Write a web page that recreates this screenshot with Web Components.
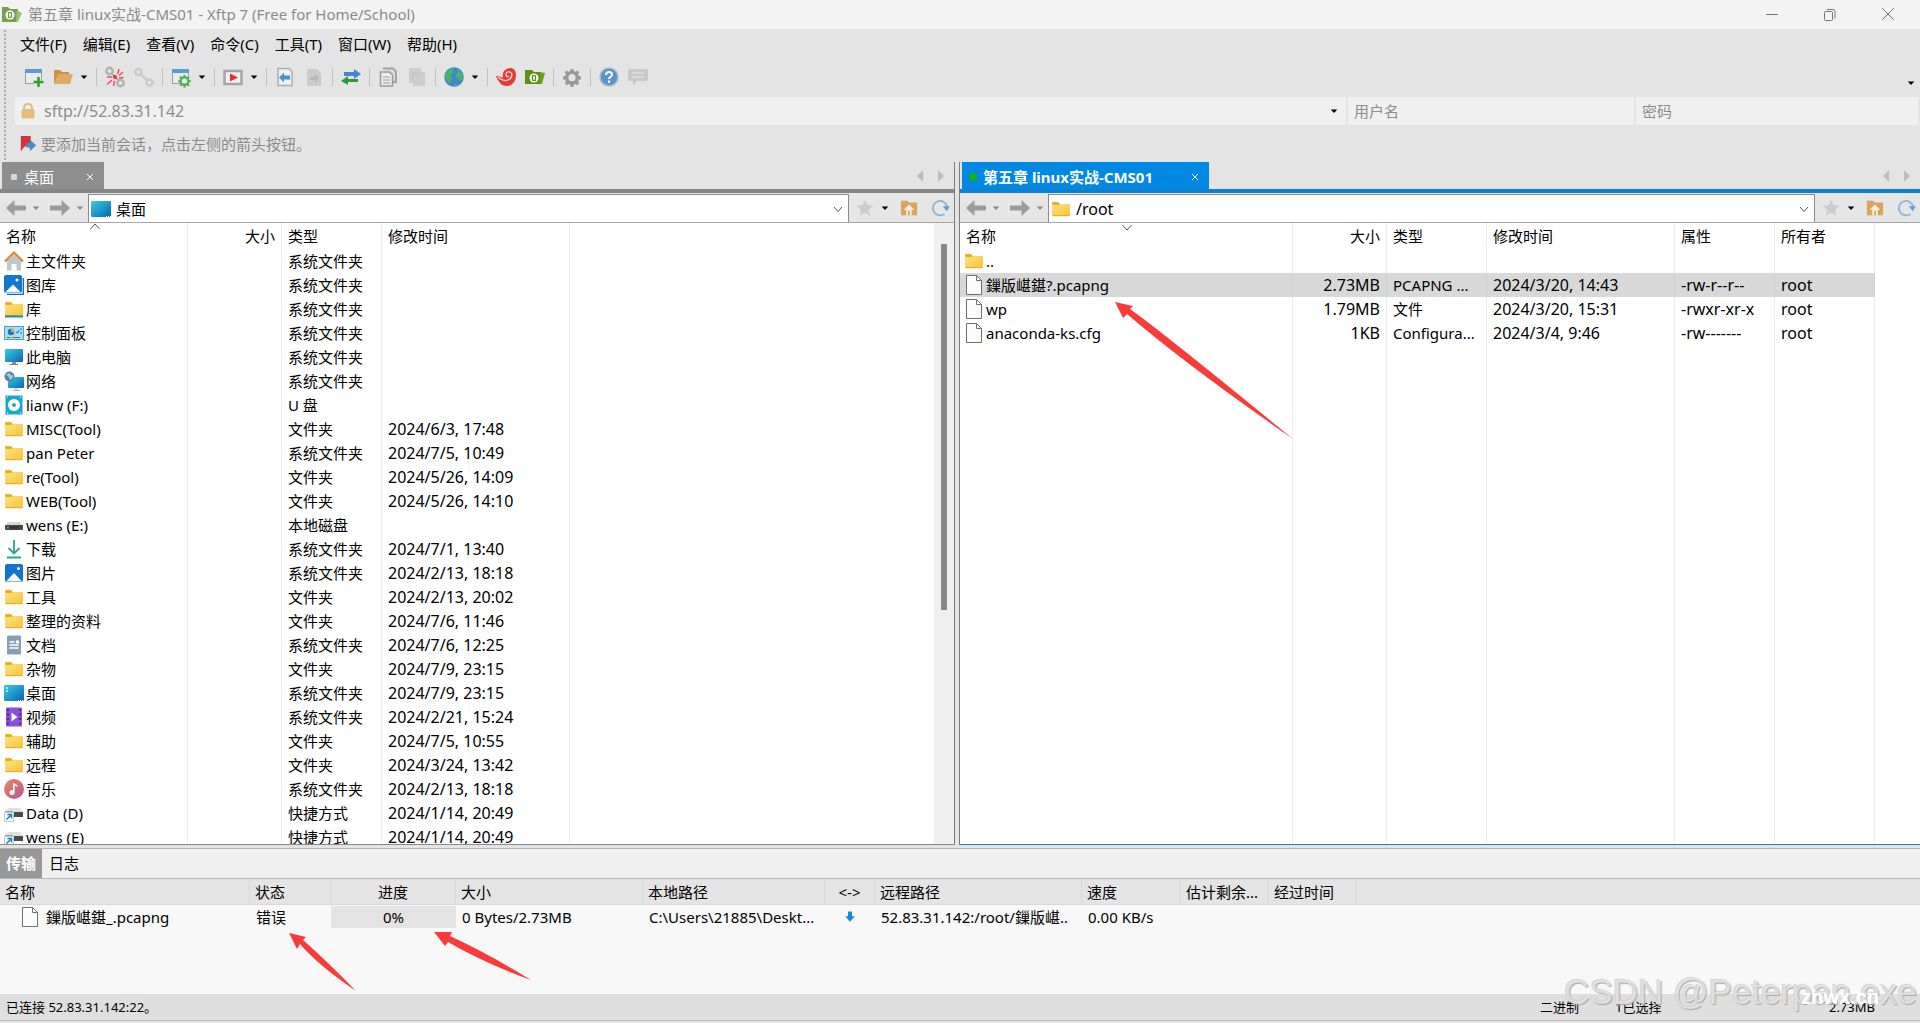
<!DOCTYPE html>
<html lang="zh-CN">
<head>
<meta charset="utf-8">
<title>第五章 linux实战-CMS01 - Xftp 7 (Free for Home/School)</title>
<style>
  html, body { margin: 0; height: 100%; }
  body { font: 15px/20px "Noto Sans", "Noto Sans CJK SC", sans-serif; color: #000; background: #e4e4e4; overflow: hidden; }
</style>
</head>
<body>
<xftp-app></xftp-app>
<script>
const FOLDER = '<defs><linearGradient id="g" x1="0" y1="0" x2="1" y2="1"><stop offset="0" stop-color="#ffe08a"/><stop offset="1" stop-color="#fbc52f"/></linearGradient></defs><path d="M1 4q0-1 1-1h5l2 2v3H1z" fill="#e8b21c"/><path d="M1 6h7l1-1h9q1 0 1 1v10q0 1-1 1H2q-1 0-1-1z" fill="url(#g)"/><path d="M1.5 16.7h17" stroke="#e0a92c"/>';
const DRIVE = '<path d="M4 7h12l3 4H1z" fill="#d3d5d6"/><rect x="1" y="10" width="18" height="5" rx="1" fill="#4b4546"/><path d="M5 12.5h10" stroke="#332e2f" stroke-width="2"/><circle cx="4" cy="12.5" r=".9" fill="#4fd05a"/>';
const LINKDRIVE = '<path d="M4 5h12l3 4H1z" fill="#dfe2e2"/><rect x="8" y="9" width="11" height="5" fill="#4b4b4b"/><path d="M1 9h8" stroke="#555"/><rect x=".5" y="9.5" width="9" height="9" fill="#fff" stroke="#c9c9c9"/><path d="M2.5 16.5l5-5M3.5 11.5h4v4" fill="none" stroke="#1681c4" stroke-width="1.5"/>';
const PICTURE = '<rect x="1" y="1" width="18" height="18" rx="2" fill="#1374cc"/><path d="M2 18.5 10 10l8 8.5z" fill="#f2f8fd"/><circle cx="14.5" cy="5.5" r="1.5" fill="#fff"/>';
const SCREEN = '<defs><linearGradient id="g" x1="0" y1="0" x2="1" y2="1"><stop offset="0" stop-color="#35cfe0"/><stop offset="1" stop-color="#0a63b8"/></linearGradient></defs>';
const GEAR = '<path d="M8.5 1h3l.5 2.4 2 .8 2-1.4 2.1 2.1-1.3 2 .8 2 2.4.6v3l-2.4.5-.8 2 1.3 2-2.1 2.1-2-1.3-2 .8-.5 2.4h-3l-.5-2.4-2-.8-2 1.3L1.900 17l1.300-2-.8-2L0 12.5v-3l2.400-.6.8-2-1.300-2L4 2.800l2 1.400 2-.8zM10 6.800a4 4 0 1 0 0 8 4 4 0 0 0 0-8z" fill-rule="evenodd"';
const ICONS = {
  folder: FOLDER,
  library: FOLDER + '<path d="M1 17.5h18" stroke="#1c87c9" stroke-width="2"/>',
  file: '<path d="M2.500 .5h10l5 5v14h-15z" fill="#fcfcfc" stroke="#6f6f6f"/><path d="M12.500 .5v5h5" fill="none" stroke="#6f6f6f"/>',
  home: '<path d="M3 10 10 3.500 17 10v9.500h-4.500V13h-5v6.500H3z" fill="#c3c6c8"/><path d="m1 10.500 9-9 9 9" fill="none" stroke="#e08433" stroke-width="2.200"/>',
  gallery: '<path d="M3 19.300h16.300V3" fill="none" stroke="#0b66b7" stroke-width="1.300"/><rect width="18" height="18" rx="2" fill="#1178d0"/><path d="M1 17.500 9 9.500l8 8z" fill="#f2f8fd"/><circle cx="13" cy="5" r="1.500" fill="#fff"/>',
  panel: '<rect x=".5" y="3.500" width="19" height="13" fill="#a5def5" stroke="#4ba3cf"/><circle cx="7" cy="9" r="3.200" fill="#1b79be"/><path d="M7 9V5.500A3.500 3.500 0 0 1 10.500 9z" fill="#f2a53a"/><path d="M12 9l1.500 1L15 7m1-1h2m-2 4h2" stroke="#1b6fae" fill="none"/><path d="M3 14.500h3m3 0h7" stroke="#4c7f4f"/><path d="M6 14.500h3" stroke="#e89a33"/>',
  computer: SCREEN + '<rect x="1" y="2" width="18" height="13" rx="1" fill="url(#g)"/><path d="M8 15h4v2H8z" fill="#8a9299"/><path d="M6 17.500h8" stroke="#7c848a"/>',
  network: SCREEN + '<rect x="4" y="6" width="16" height="11" rx="1" fill="url(#g)"/><path d="M12 17v2m-3 .3h7" stroke="#9aa" /><circle cx="5.500" cy="5.500" r="5" fill="#4f87a8"/><path d="M2 4q3-3 4-1t3 1q0 4-3 5-1-4-4-5z" fill="#a9cbdc"/>',
  usb: '<rect x="1.500" y=".5" width="17" height="19" fill="#18a9cc"/><circle cx="10" cy="10" r="6" fill="#fff"/><circle cx="10" cy="10" r="2" fill="#18a9cc"/><path d="M3 2h1m12 0h1M3 18h1m12 0h1" stroke="#fff"/>',
  drive: DRIVE,
  linkdrive: LINKDRIVE,
  download: '<path d="M10 1v13M4.500 9l5.500 5.500L15.500 9M3 18.500h14" fill="none" stroke="#2ba58b" stroke-width="1.800"/>',
  picture: PICTURE,
  document: '<rect x="3" y=".5" width="14" height="19" rx="1" fill="#8a9fb4"/><path d="M5.500 7h5M5.500 10h9M5.500 13h9" stroke="#fff" stroke-width="1.500"/><rect x="12" y="5.500" width="3" height="3" fill="#fff"/>',
  desktop: SCREEN + '<rect y="2" width="20" height="16" rx="1" fill="url(#g)"/><path d="M2 5h2M2 8h2" stroke="#d8f6fb" stroke-width="1.500"/><path d="M14 17.500h5" stroke="#fff" stroke-dasharray="1 1"/>',
  desk: SCREEN + '<rect y="2" width="20" height="16" rx="1" fill="url(#g)"/><path d="M15 17.500h5" stroke="#fff" stroke-dasharray="1 1"/>',
  video: '<rect x="2" y=".5" width="16" height="19" rx="1" fill="#8a50d8"/><path d="M4 2v17M16 2v17" stroke="#4b2688" stroke-width="1.800" stroke-dasharray="2 2.500"/><path d="m7.500 5.500 6 4.500-6 4.500z" fill="#fff"/>',
  music: '<defs><linearGradient id="g" x1="0" y1="0" x2="1" y2="1"><stop offset="0" stop-color="#f0865a"/><stop offset="1" stop-color="#b2559a"/></linearGradient></defs><circle cx="10" cy="10" r="10" fill="url(#g)"/><circle cx="8" cy="13.500" r="2.500" fill="#fff"/><path d="M9.800 13.500V4.500q1 2 3.500 2.500" fill="none" stroke="#fff" stroke-width="1.600"/>',
  app: '<path d="M0 3h6l2 2h8v13H0z" fill="#7a9f52"/><path d="m15 6 5 3-4 9h-2z" fill="#a3bf80"/><circle cx="8" cy="11" r="4.500" fill="#fff"/><path d="M6.500 8v5q1 1 2 0m1 1V9q-1-1-2 0" fill="none" stroke="#6d9c3f" stroke-width="1.300"/>',
  newSession: '<rect x="1.500" y="2.500" width="16" height="14" fill="#e9ecee" stroke="#9b9fa3"/><rect x="1" y="2" width="17" height="4" fill="#5c9bd1"/><path d="M14.500 10v10M9.500 15h10" stroke="#e4e4e4" stroke-width="4"/><path d="M14.500 10v10M9.500 15h10" stroke="#2ca02c" stroke-width="2.500"/>',
  open: '<path d="M1 3h6l2 2h7v4H5L2 17H1z" fill="#c8934b"/><path d="M5 7h15l-3 10H1z" fill="#e0ab66"/>',
  disconnect: '<g fill="none" stroke="#b0b0b0" stroke-width="2.400"><circle cx="4.500" cy="4" r="3.200"/><circle cx="15.500" cy="16" r="3.200"/></g><path d="m7 7 6 6" stroke="#b0b0b0" stroke-width="2"/><path d="m12.500 7 1.500-5m0 6.500 4-3.500m-4 6 4.500-.5M7 10H2m5 3-5 4.500M9.500 14l-1 5" stroke="#e8565c" stroke-width="1.600"/><circle cx="10" cy="10" r="2.200" fill="#e0484e"/>',
  link: '<g fill="none" stroke="#cbcbcb" stroke-width="2.500"><circle cx="4.500" cy="5" r="3"/><circle cx="15.500" cy="15.500" r="3"/><path d="m7 7.500 6 5.500"/></g>',
  props: '<rect x="1.500" y="2.500" width="16" height="14" fill="#e9ecee" stroke="#9b9fa3"/><rect x="1" y="2" width="17" height="4" fill="#5c9bd1"/><g transform="translate(7 7) scale(.65)">' + GEAR + ' fill="#4caf50" stroke="#e9ecee" stroke-width=".5"/></g>',
  play: '<rect x="1.500" y="4" width="17" height="13" fill="#f0f0f0" stroke="#a5a5a5" stroke-width="2.500"/><path d="m7 6.500 8 4-8 4z" fill="#dd2f38"/>',
  pageIn: '<path d="M3 1.500h11l3 3v14H3z" fill="#eef0f1" stroke="#a9adb0" stroke-width="1.500"/><path d="m4 10.500 5-5v3h6v4H9v3z" fill="#4a8fce"/>',
  pageOut: '<path d="M3 2h10l4 4v13H3z" fill="#cbcbcb"/><path d="m15 11-4-4v3H6v3h5v3z" fill="#b9b9b9"/>',
  sync: '<path d="M3 5h10V2l7 5-7 5V9H3z" fill="#4285d0"/><path d="M17 12H7V9l-7 5 7 4v-3h10z" fill="#2f9a35"/>',
  copy: '<path d="M5 1.500h10l3 3V15h-4" fill="#dcdcdc" stroke="#a4a4a4" stroke-width="2"/><path d="M2.500 5h9l3 3v11h-12z" fill="#ececec" stroke="#9b9b9b" stroke-width="1.600"/><path d="M5 10h7m-7 3h7m-7 3h7" stroke="#9b9b9b" stroke-width="1.200"/>',
  paste: '<path d="M2 1h12v4h4v14H6v-3H2z" fill="#cdcdcd"/><path d="M6 15V6h8" fill="none" stroke="#c2c2c2"/>',
  globe: '<circle cx="10" cy="10" r="9.800" fill="#4187cf"/><path d="M2 5q5-5 8-3l-1 4-3 2 2 4-2 4Q1 13 1 9zM13 2q5 3 6 7l-2 6-3-3-3-4 3-2zM9 19l3-2 2 1-3 2z" fill="#48b566"/>',
  xshell: '<path d="M0 9q4 0 7 2-1-4 1-7t7-3q5 1 5 7 0 9-8 11-8 1-12-10z" fill="#e63a35"/><path d="M2 10q7 6 12 2 4-5 0-7-4-1-4 3 1 3 3 1" fill="none" stroke="#f5d9d6" stroke-width="1.300"/>',
  xftp: '<path d="M0 3h7l2 2h7v12H0z" fill="#5d8f10"/><path d="m15 5 5 1-3 11h-2z" fill="#6f9f20"/><circle cx="9" cy="11" r="4.500" fill="#fff"/><path d="M7.500 8v5q1 1 2 0m1 1V9q-1-1-2 0" fill="none" stroke="#5d8f10" stroke-width="1.300"/>',
  gear: '<g transform="translate(1 1) scale(.9)">' + GEAR + ' fill="#999"/></g>',
  help: '<circle cx="10" cy="10" r="9" fill="#5b93cc" stroke="#a8bdd2" stroke-width="1.500"/><path d="M7 8q0-3 3-3t3 2.500q0 1.500-1.500 2.500T10 12m0 1.500V16" fill="none" stroke="#fff" stroke-width="2"/>',
  chat: '<path d="M2 2h16q2 0 2 2v8q0 2-2 2H9l-4 5v-5H2q-2 0-2-2V4q0-2 2-2z" fill="#c9c9c9"/><path d="M4 6h12M4 10h12" stroke="#dedede" stroke-width="1.500"/>',
  lock: '<path d="M6 9V7q0-4 4-4t4 4v2" fill="none" stroke="#dcbd86" stroke-width="2"/><rect x="3.500" y="8" width="13" height="9.500" rx="1.500" fill="#e6bd7c"/>',
  flag: '<path d="M2 1h11v7l-4 4-3 1-4 5z" fill="#d5323c"/><path d="M8 9h4V5l7 6.500-7 6.500v-4H8z" fill="#4e88c6"/>',
  caret: '<path d="M4.500 7.500h11L10 13.500z" fill="currentColor"/>',
  back: '<path d="M0 10 8.500 2v5.500H20v5H8.500V18z" fill="#9b9b9b"/>',
  forward: '<path d="M20 10 11.500 2v5.500H0v5h11.500V18z" fill="#9b9b9b"/>',
  star: '<path d="m10 1 2.800 5.800 6.200.8-4.500 4.400 1.100 6.300L10 15.300l-5.600 3 1.100-6.300L1 7.600l6.200-.8z" fill="#cdcdcd"/>',
  up: '<path d="M1 2h7l2 2h9v14H1z" fill="#dba35e"/><path d="M7 18v-6H4l6-6 6 6h-3v6h-2v-5H9v5z" fill="#fbf0df"/>',
  refresh: '<path d="M15 16.500A8 8 0 1 1 18 9" fill="none" stroke="#8ab5da" stroke-width="2"/><path d="M13 8h8l-3.500 5.500z" fill="#5e9fd6"/>',
  tri: '<path d="M13 4v12l-6-6z" fill="#bdbdbd"/>',
  triR: '<path d="M7 4v12l6-6z" fill="#bdbdbd"/>',
  close: '<path d="m7 7 6 6m0-6-6 6" stroke="currentColor" fill="none"/>',
  chevron: '<path d="m6 8 4 4.500L14 8" stroke="#555" fill="none"/>',
  sortUp: '<path d="m5.500 12 4.500-5 4.500 5" stroke="#555" fill="none"/>',
  sortDown: '<path d="m5.500 8 4.500 5 4.500-5" stroke="#555" fill="none"/>',
  min: '<path d="M4 10.500h12" stroke="#777"/>',
  restore: '<rect x="4.500" y="7.500" width="8" height="9" rx="1" fill="none" stroke="#777"/><path d="M7 5.500h6q2 0 2 2v7" fill="none" stroke="#777"/>',
  winclose: '<path d="m4 4 12 12M16 4 4 16" stroke="#777"/>',
  down: '<path d="M7.500 3h5v6H16l-6 7-6-7h3.500z" fill="#0d8fdb"/>'
};

class XIcon extends HTMLElement {
  constructor() { super(); this.attachShadow({ mode: 'open' }); }
  connectedCallback() {
    this.shadowRoot.innerHTML = `<style>:host{display:inline-block;flex:none;width:20px;height:20px}svg{display:block;width:100%;height:100%;overflow:visible}</style><svg viewBox="0 0 20 20" aria-hidden="true">${ICONS[this.getAttribute('name')] || ''}</svg>`;
  }
}
customElements.define('x-icon', XIcon);

const BTN = 'button{font:inherit;color:inherit;background:none;border:0;padding:0;margin:0;display:flex;align-items:center;justify-content:center}';
const ib = (name, label, cls = '') => `<button class="${cls}" aria-label="${label}"><x-icon name="${name}"></x-icon></button>`;

class TitleBar extends HTMLElement {
  constructor() {
    super();
    this.attachShadow({ mode: 'open' }).innerHTML = `<style>${BTN}
      :host{display:flex;align-items:center;height:29px;box-sizing:border-box;background:#f3f3f3;color:#8a8a8a;padding:0 8px 2px 2px;gap:6px}
      .t{flex:1}.c{display:flex;gap:10px}.c button{width:48px;height:26px}</style>
      <x-icon name="app"></x-icon><span class="t"><slot></slot></span>
      <div class="c">${ib('min', '最小化')}${ib('restore', '还原')}${ib('winclose', '关闭')}</div>`;
  }
}
customElements.define('title-bar', TitleBar);

class MenuBar extends HTMLElement {
  constructor() {
    super();
    const items = ['文件(F)', '编辑(E)', '查看(V)', '命令(C)', '工具(T)', '窗口(W)', '帮助(H)'];
    this.attachShadow({ mode: 'open' }).innerHTML = `<style>${BTN}:host{display:flex;gap:16px;height:30px;padding-left:20px}</style>` + items.map(t => `<button>${t}</button>`).join('');
  }
}
customElements.define('menu-bar', MenuBar);

class ToolGroup extends HTMLElement {
  constructor() { super(); this.attachShadow({ mode: 'open' }); }
  connectedCallback() {
    this.shadowRoot.innerHTML = `<style>${BTN}
      :host{display:flex;align-items:center;gap:9px;padding:0 8px;border-right:1px solid #c2c2c2;height:18px}
      :host(:last-of-type){border-right:0}
      .caret{width:10px;margin:0 -1px 0 -3px}.caret x-icon{width:12px;height:12px}</style>` +
      this.getAttribute('icons').split(' ').map(n => ib(n, n, n === 'caret' ? 'caret' : '')).join('');
  }
}
customElements.define('tool-group', ToolGroup);

class ToolBar extends HTMLElement {
  constructor() {
    super();
    const g = ['newSession open caret', 'disconnect link', 'props caret', 'play caret', 'pageIn pageOut', 'sync', 'copy paste', 'globe caret', 'xshell xftp', 'gear', 'help chat'];
    this.attachShadow({ mode: 'open' }).innerHTML = `<style>${BTN}:host{display:flex;align-items:center;height:38px;box-sizing:border-box;padding:0 3px 2px 16px}
      .more{margin-left:auto;align-self:flex-end;width:12px;height:24px}.more x-icon{width:12px;height:12px}</style>` + g.map(i => `<tool-group icons="${i}"></tool-group>`).join('') + ib('caret', '更多', 'more');
  }
}
customElements.define('tool-bar', ToolBar);

class ConnectBar extends HTMLElement {
  constructor() {
    super();
    this.attachShadow({ mode: 'open' }).innerHTML = `<style>${BTN}
      :host{display:flex;gap:2px;height:28px;padding:0 2px 0 15px}
      div{display:flex;align-items:center;background:#f0f0f0;box-sizing:border-box;min-width:0}
      .a{flex:1;padding:0 6px 0 3px;gap:6px}.a input{font-size:16px}
      .u{width:286px;padding-left:6px}.p{width:282px;padding-left:6px}
      input{flex:1;min-width:0;border:0;padding:0;background:none;font:inherit;color:#8c8c8c;outline:0}
      input::placeholder{color:#8c8c8c;opacity:1}
      button x-icon{width:12px;height:12px}</style>
      <div class="a"><x-icon name="lock"></x-icon><input aria-label="地址" value="sftp://52.83.31.142">${ib('caret', '历史')}</div>
      <div class="u"><input aria-label="用户名" placeholder="用户名"></div>
      <div class="p"><input aria-label="密码" type="password" placeholder="密码"></div>`;
  }
}
customElements.define('connect-bar', ConnectBar);

class HintBar extends HTMLElement {
  constructor() {
    super();
    this.attachShadow({ mode: 'open' }).innerHTML = `<style>:host{display:flex;align-items:center;height:37px;padding-left:19px;gap:4px;color:#8c8c8c}x-icon{width:18px;height:18px}</style><x-icon name="flag"></x-icon><span><slot></slot></span>`;
  }
}
customElements.define('hint-bar', HintBar);

class FileTable extends HTMLElement {
  constructor() { super(); this.attachShadow({ mode: 'open' }); }
  set data({ cols, rows, sort, selected }) {
    const head = cols.map((c, i) => `<th class="${c[2] || ''}">${i ? '' : `<x-icon name="${sort}"></x-icon>`}${c[0]}</th>`).join('');
    const body = rows.map((r, k) => `<tr class="${k === selected ? 'sel' : ''}">` + cols.map((c, i) => i
      ? `<td class="${c[2] || ''}">${r[i + 1] || ''}</td>`
      : `<td class="n"><span><x-icon name="${r[0]}"></x-icon>${r[1]}</span></td>`).join('') + '<td class="x"></td></tr>').join('');
    this.shadowRoot.innerHTML = `<style>
      :host{display:block;flex:1;min-width:0;overflow:hidden;background:#fff}
      table{border-collapse:separate;border-spacing:0;table-layout:fixed;width:100%;height:100%}
      th{font-weight:400;text-align:left;height:26px}
      th,td{padding:0 6px;border-right:1px solid #e9eeee;white-space:nowrap;overflow:hidden;box-sizing:border-box}
      td{height:24px}
      td.num{font-size:16px}
      th:first-child{position:relative}
      th x-icon{position:absolute;left:50%;top:-6px;margin-left:-9px}
      .r{text-align:right}.x{border:0}
      .n{padding:0 0 0 4px}.n span{display:flex;align-items:center;gap:2px}
      .sel td:not(.x){background:#d8d8d8;border-color:#cdd0d0}
      .fill td{height:auto}</style>
      <table><colgroup>${cols.map(c => `<col style="width:${c[1]}px">`).join('')}<col></colgroup>
      <thead><tr>${head}<th class="x"></th></tr></thead><tbody>${body}<tr class="fill">${cols.map(() => '<td></td>').join('')}<td class="x"></td></tr></tbody></table>`;
  }
}
customElements.define('file-table', FileTable);

class FilePane extends HTMLElement {
  constructor() { super(); this.attachShadow({ mode: 'open' }); }
  connectedCallback() {
    const a = n => this.getAttribute(n);
    this.shadowRoot.innerHTML = `<style>${BTN}
      :host{--c:#8e8e8e;--line:#858585;display:flex;flex-direction:column;min-width:0;min-height:0;box-sizing:border-box;border-right:1px solid #7c7c7c;border-bottom:1px solid #8a8a8a}
      :host([active]){--c:#0088e2;--line:#0c82cf;border-right:0;border-left:1px solid #7c7c7c;border-bottom-color:#1b83b5}
      .tabs{display:flex;align-items:flex-end;height:27px;padding:0 3px 0 2px;border-bottom:4px solid var(--line);flex:none}
      .tab{display:flex;align-items:center;height:27px;box-sizing:border-box;background:var(--c);color:#fff;padding:2px 4px 0 9px;min-width:102px}
      :host([active]) .tab{font-weight:700;padding-left:7px}
      .dot{width:6px;height:6px;background:#d6d6d6;margin-right:7px;border-radius:1px}
      :host([active]) .dot{background:#12b312;border-radius:50%;width:8px;height:8px;margin-right:6px}
      .tab button{margin-left:auto}
      :host([active]) .tab button{margin-left:32px}
      .tn{margin-left:auto;display:flex;gap:1px;align-self:center}
      .nav{display:flex;align-items:center;height:30px;box-sizing:border-box;border-bottom:1px solid #a5a5a5;padding:1px 4px 0 6px;background:#e6e6e6;flex:none}
      .nav x-icon{display:block}
      .cr{color:#8a8a8a;margin:0 7px 0 3px}.cr x-icon,.blk x-icon{width:12px;height:12px}
      .cr{width:14px}.blk{width:12px}
      .box{flex:1;min-width:0;display:flex;align-items:center;align-self:stretch;background:#fff;border:1px solid #8b8b8b;border-bottom:0;padding:0 0 0 2px;gap:5px;margin-left:-6px}
      .box input{flex:1;min-width:0;border:0;padding:0;background:none;font:inherit;font-size:var(--path,15px);color:inherit;outline:0}
      :host([active]) .box{--path:16px}
      .tools{display:flex;align-items:center;gap:4px;margin-left:6px}
      .tools button:nth-child(n+3){margin-left:4px}
      .tools button:last-child{margin-left:7px}
      .body{flex:1;display:flex;min-height:0;background:#fff}
      .sb{width:20px;background:#f0f0f0;flex:none;padding:21px 7px 0;box-sizing:border-box}
      .sb i{display:block;width:6px;height:61%;background:#888}
      .nav .tools x-icon{height:18px}
      .nav .tools .blk x-icon{height:12px}</style>
      <div class="tabs"><div class="tab"><i class="dot"></i><span>${a('tab')}</span>${ib('close', '关闭')}</div>
      <div class="tn">${ib('tri', '上一个')}${ib('triR', '下一个')}</div></div>
      <div class="nav">${ib('back', '后退')}${ib('caret', '后退历史', 'cr')}${ib('forward', '前进')}${ib('caret', '前进历史', 'cr')}
      <div class="box"><x-icon name="${a('icon')}"></x-icon><input aria-label="路径" value="${a('path')}">${ib('chevron', '展开')}</div>
      <div class="tools">${ib('star', '书签')}${ib('caret', '书签列表', 'blk')}${ib('up', '上级目录')}${ib('refresh', '刷新')}</div></div>
      <div class="body"><slot></slot>${this.hasAttribute('active') ? '' : '<div class="sb"><i></i></div>'}</div>`;
  }
}
customElements.define('file-pane', FilePane);

class TransferPanel extends HTMLElement {
  constructor() {
    super();
    const cols = [['名称', 250], ['状态', 81], ['进度', 125, 'c'], ['大小', 187], ['本地路径', 182], ['&lt;-&gt;', 50, 'c'], ['远程路径', 207], ['速度', 99], ['估计剩余...', 88], ['经过时间', 87]];
    this.attachShadow({ mode: 'open' }).innerHTML = `<style>${BTN}
      :host{display:block}
      .tabs{display:flex;height:31px;box-sizing:border-box;border-top:1px solid #b2b2b2;border-bottom:1px solid #b5b8b8;background:#f0f0f0}
      .tabs button{padding:0 6px 2px;width:42px}.tabs .on{background:#989898;color:#fff;font-weight:700}
      .tabs button:last-child{width:44px}
      .list{height:115px;background:#f8f8f8}
      table{border-collapse:separate;border-spacing:0;table-layout:fixed;width:100%}
      th,td{font-weight:400;text-align:left;padding:0 0 0 5px;white-space:nowrap;overflow:hidden;box-sizing:border-box}
      th{height:26px;background:#e4e4e4;border-right:1px solid #d6dada;border-bottom:1px solid #d8d8d8}
      th:last-child{border-right:0}
      tr .c{text-align:center;padding:0}
      td{height:24px;padding-left:6px}
      td:first-child{padding-left:20px}
      span{display:flex;align-items:center;gap:6px}
      .p div{background:#e3e3e3;height:22px;line-height:22px}
      .d x-icon{display:block;width:16px;height:16px;margin:0 auto}</style>
      <div class="tabs"><button class="on">传输</button><button>日志</button></div>
      <div class="list"><table><colgroup>${cols.map(c => `<col style="width:${c[1]}px">`).join('')}<col></colgroup>
      <thead><tr>${cols.map(c => `<th class="${c[2] || ''}">${c[0]}</th>`).join('')}<th></th></tr></thead>
      <tbody><tr><td><span><x-icon name="file"></x-icon>鏁版嵁鍖_.pcapng</span></td><td>错误</td><td class="c p"><div>0%</div></td><td>0 Bytes/2.73MB</td><td>C:\\Users\\21885\\Deskt...</td><td class="c d"><x-icon name="down"></x-icon></td><td>52.83.31.142:/root/鏁版嵁..</td><td>0.00 KB/s</td><td></td><td></td><td></td></tr></tbody></table></div>`;
  }
}
customElements.define('transfer-panel', TransferPanel);

class StatusBar extends HTMLElement {
  constructor() {
    super();
    this.attachShadow({ mode: 'open' }).innerHTML = `<style>
      :host{display:flex;align-items:center;height:27px;box-sizing:border-box;background:#dfdfdf;border-bottom:1px solid #b8bcbc;padding:0 45px 0 6px;font-size:13px;margin-bottom:2px}
      .m{margin-left:auto;width:75px}.s{width:214px}</style>
      <span>已连接 52.83.31.142:22。</span><span class="m">二进制</span><span class="s">1已选择</span><span>2.73MB</span>`;
  }
}
customElements.define('status-bar', StatusBar);

/* Red pointer drawn over the content */
class RedArrow extends HTMLElement {
  constructor() { super(); this.attachShadow({ mode: 'open' }); }
  connectedCallback() {
    this.shadowRoot.innerHTML = `<style>:host{position:absolute;pointer-events:none}svg{display:block;overflow:visible}</style><svg width="1" height="1"><path d="${this.getAttribute('d')}" fill="#fb3a3a"/></svg>`;
  }
}
customElements.define('red-arrow', RedArrow);

class XftpApp extends HTMLElement {
  constructor() {
    super();
    this.attachShadow({ mode: 'open' }).innerHTML = `<style>
      :host{display:flex;flex-direction:column;height:100vh;position:relative;overflow:hidden;background:#e4e4e4}
      .top{display:block;background:radial-gradient(circle,#aaa 1px,transparent 1px) 3px 0/4px 4px repeat-y,#e4e4e4}
      .panes{flex:1;min-height:0;display:grid;grid-template-columns:955fr 961fr;grid-template-rows:minmax(0,1fr);gap:4px;margin-bottom:3px}
      .a{left:1115px;top:302px}.b{left:289px;top:933px}.c{left:434px;top:932px}
      .w1,.w2{position:absolute;pointer-events:none;white-space:nowrap;font-family:"Liberation Sans",sans-serif}
      .w1{right:3px;bottom:11px;font-size:35px;line-height:40px;color:rgba(242,242,242,.7);text-shadow:1px 1px 1px #a8a8a8,-1px -1px 1px #d0d0d0}
      .w2{right:41px;bottom:16px;font-size:20px;line-height:20px;font-weight:700;color:#fff}</style>
      <title-bar>第五章 linux实战-CMS01 - Xftp 7 (Free for Home/School)</title-bar>
      <div class="top"><menu-bar></menu-bar><tool-bar></tool-bar><connect-bar></connect-bar><hint-bar>要添加当前会话，点击左侧的箭头按钮。</hint-bar></div>
      <div class="panes">
        <file-pane tab="桌面" icon="desk" path="桌面"><file-table id="local"></file-table></file-pane>
        <file-pane active tab="第五章 linux实战-CMS01" icon="folder" path="/root"><file-table id="remote"></file-table></file-pane>
      </div>
      <transfer-panel></transfer-panel><status-bar></status-bar>
      <red-arrow class="a" d="M0 0 18 4 15 7Q50 32 178 137Q70 62 12 12L8 16Z"></red-arrow>
      <red-arrow class="b" d="M0 0 17 4 14 7Q40 30 67 58Q30 33 11 11L8 16Z"></red-arrow>
      <red-arrow class="c" d="M0 0 18 0 16 4Q55 22 97 48Q50 31 14 10L11 14Z"></red-arrow>
      <div class="w1">CSDN @Peterpan.exe</div><div class="w2">znwx.cn</div>`;
    const S = '系统文件夹', F = '文件夹';
    this.shadowRoot.getElementById('local').data = {
      sort: 'sortUp', selected: -1,
      cols: [['名称', 188], ['大小', 94, 'r num'], ['类型', 100], ['修改时间', 188, 'num']],
      rows: [
        ['home', '主文件夹', '', S], ['gallery', '图库', '', S], ['library', '库', '', S], ['panel', '控制面板', '', S],
        ['computer', '此电脑', '', S], ['network', '网络', '', S], ['usb', 'lianw (F:)', '', 'U 盘'],
        ['folder', 'MISC(Tool)', '', F, '2024/6/3, 17:48'], ['folder', 'pan Peter', '', S, '2024/7/5, 10:49'],
        ['folder', 're(Tool)', '', F, '2024/5/26, 14:09'], ['folder', 'WEB(Tool)', '', F, '2024/5/26, 14:10'],
        ['drive', 'wens (E:)', '', '本地磁盘'], ['download', '下载', '', S, '2024/7/1, 13:40'],
        ['picture', '图片', '', S, '2024/2/13, 18:18'], ['folder', '工具', '', F, '2024/2/13, 20:02'],
        ['folder', '整理的资料', '', F, '2024/7/6, 11:46'], ['document', '文档', '', S, '2024/7/6, 12:25'],
        ['folder', '杂物', '', F, '2024/7/9, 23:15'], ['desktop', '桌面', '', S, '2024/7/9, 23:15'],
        ['video', '视频', '', S, '2024/2/21, 15:24'], ['folder', '辅助', '', F, '2024/7/5, 10:55'],
        ['folder', '远程', '', F, '2024/3/24, 13:42'], ['music', '音乐', '', S, '2024/2/13, 18:18'],
        ['linkdrive', 'Data (D)', '', '快捷方式', '2024/1/14, 20:49'], ['linkdrive', 'wens (E)', '', '快捷方式', '2024/1/14, 20:49']
      ]
    };
    this.shadowRoot.getElementById('remote').data = {
      sort: 'sortDown', selected: 1,
      cols: [['名称', 333], ['大小', 94, 'r num'], ['类型', 100], ['修改时间', 188, 'num'], ['属性', 100, 'num'], ['所有者', 100, 'num']],
      rows: [
        ['folder', '..'],
        ['file', '鏁版嵁鍖?.pcapng', '2.73MB', 'PCAPNG ...', '2024/3/20, 14:43', '-rw-r--r--', 'root'],
        ['file', 'wp', '1.79MB', '文件', '2024/3/20, 15:31', '-rwxr-xr-x', 'root'],
        ['file', 'anaconda-ks.cfg', '1KB', 'Configura...', '2024/3/4, 9:46', '-rw-------', 'root']
      ]
    };
  }
}
customElements.define('xftp-app', XftpApp);
</script>
</body>
</html>
